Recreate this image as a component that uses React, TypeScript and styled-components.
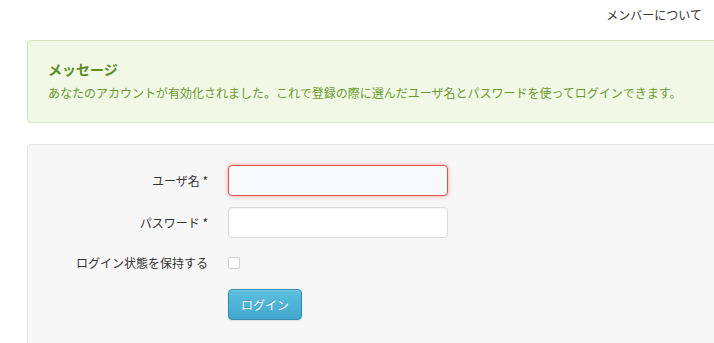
import React from "react";
import styled, { createGlobalStyle } from "styled-components";

const Global = createGlobalStyle`
  html, body { margin: 0; padding: 0; background: #fff; overflow: hidden; }
  body { font-family: "Noto Sans CJK JP", "Noto Sans", "Liberation Sans", sans-serif; font-size: 12px; color: #333; }
`;

export default function App(): JSX.Element {
  return (
    <>
      <Global />
      <Nav>
        <NavLink href="#">メンバーについて</NavLink>
      </Nav>
      <Main>
        <Alert>
          <AlertTitle>メッセージ</AlertTitle>
          <AlertText>あなたのアカウントが有効化されました。これで登録の際に選んだユーザ名とパスワードを使ってログインできます。</AlertText>
        </Alert>

        <Well>
          <Row gap={11}>
            <Label htmlFor="username">ユーザ名 *</Label>
            <TextInput id="username" type="text" invalid />
          </Row>
          <Row gap={16}>
            <Label htmlFor="password">パスワード *</Label>
            <TextInput id="password" type="password" />
          </Row>
          <Row gap={17}>
            <Label htmlFor="remember">ログイン状態を保持する</Label>
            <Check id="remember" type="checkbox" />
          </Row>
          <Row gap={0}>
            <Label as="span" />
            <Button type="submit">ログイン</Button>
          </Row>
        </Well>
      </Main>
    </>
  );
}

// ================= Styled =================
const Nav = styled.nav`display:flex;justify-content:flex-end;height:40px;padding:6px 12px 0 0;box-sizing:border-box;`;
const NavLink = styled.a`color:#333;text-decoration:none;font-size:12px;line-height:18px;`;
const Main = styled.main`padding-left:27px;margin-right:-20px;`;
const Alert = styled.div`background:#f1f8e6;border:1px solid #d3e6bd;border-radius:4px;padding:18px 20px 20px;color:#6a9a30;`;
const AlertTitle = styled.h4`margin:0;font-size:14px;line-height:20px;font-weight:700;color:#5a8c1f;`;
const AlertText = styled.p`margin:5px 0 0;font-size:12px;line-height:18px;`;
const Well = styled.form`margin-top:21px;background:#f7f7f7;border:1px solid #e3e3e3;border-radius:4px;padding:20px 20px 40px;`;
const Row = styled.div<{ gap: number }>`display:flex;align-items:center;gap:20px;margin-bottom:${({ gap }) => gap}px;`;
const Label = styled.label`width:160px;flex:none;text-align:right;font-size:12px;line-height:18px;color:#333;`;
const TextInput = styled.input<{ invalid?: boolean }>`
  width:220px;height:31px;box-sizing:border-box;border-radius:4px;padding:4px 6px;font-size:12px;outline:none;
  border:1px solid ${({ invalid }) => (invalid ? "#d9534f" : "#dcdcdc")};
  background:${({ invalid }) => (invalid ? "#f6fafd" : "#fff")};
  box-shadow:${({ invalid }) => (invalid ? "0 0 4px rgba(233,50,45,0.45)" : "inset 0 1px 1px rgba(0,0,0,0.04)")};
`;
const Check = styled.input`appearance:none;margin:0;width:12px;height:12px;border:1px solid #cfcfcf;border-radius:2px;background:#fff;box-sizing:border-box;`;
const Button = styled.button`
  width:74px;height:31px;border-radius:4px;border:1px solid #2f8aad;color:#fff;font-size:12px;font-family:inherit;
  background:linear-gradient(#5bc0de,#43a6cf);text-shadow:0 -1px 0 rgba(0,0,0,0.2);
  box-shadow:inset 0 1px 0 rgba(255,255,255,0.2),0 1px 2px rgba(0,0,0,0.1);cursor:pointer;
`;
